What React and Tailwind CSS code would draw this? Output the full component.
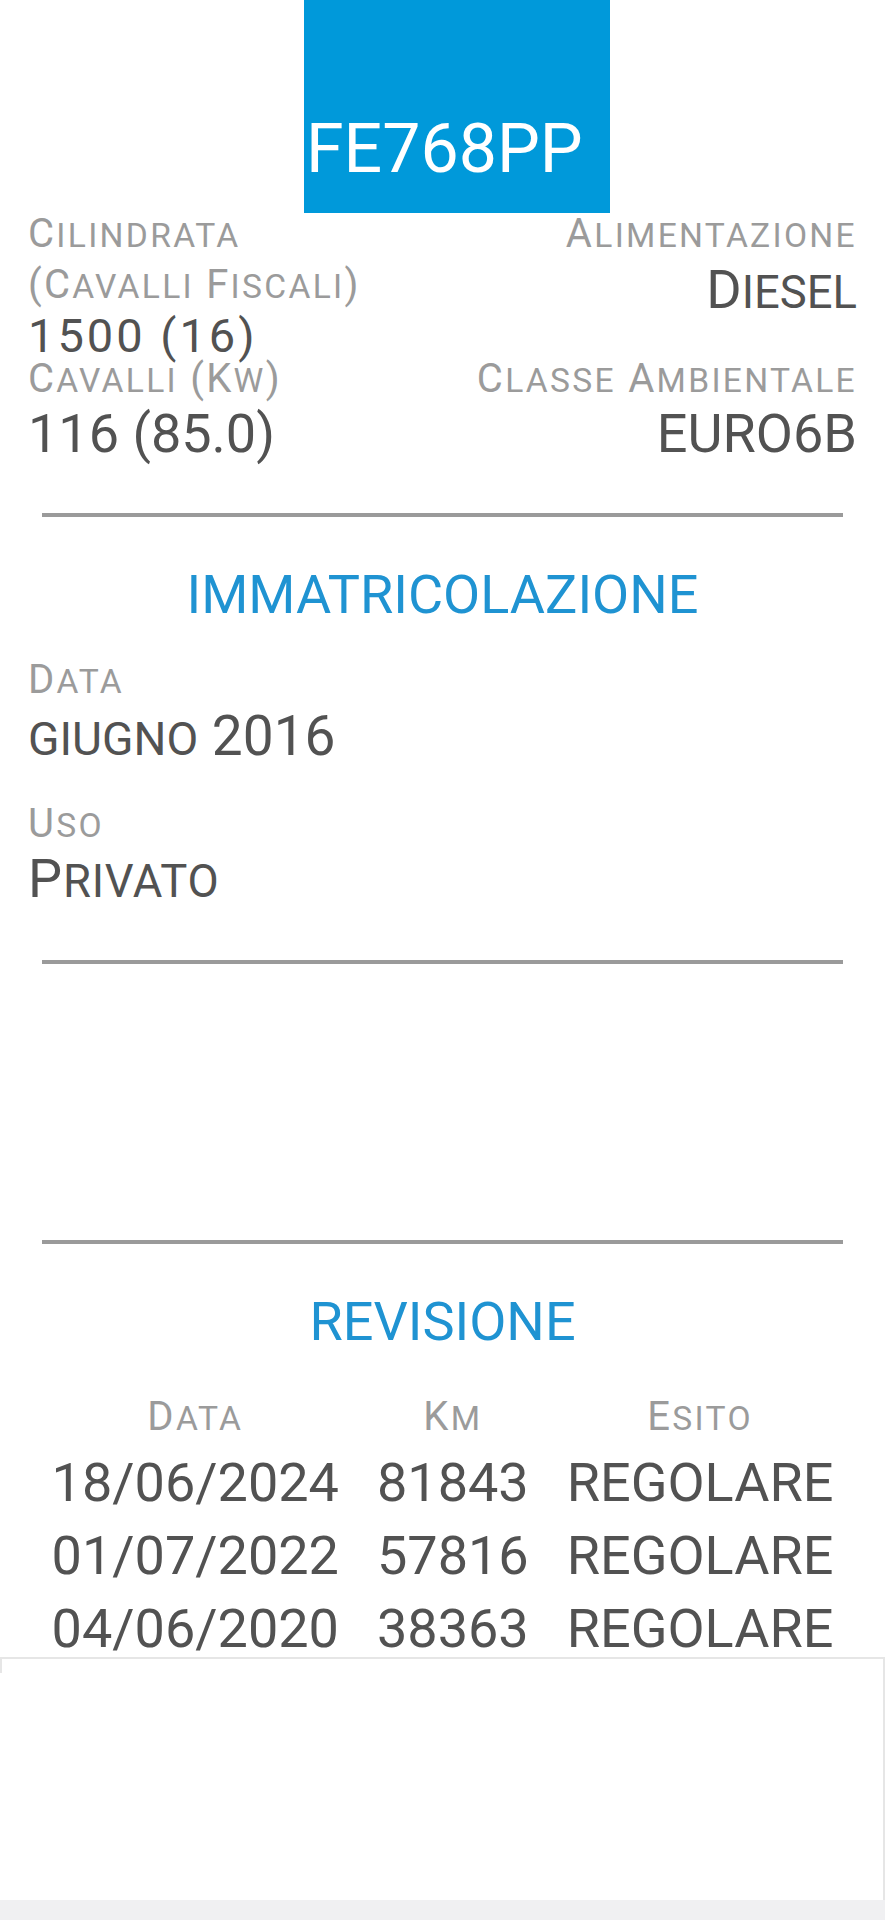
import React from "react";

function SC({ text }) {
  const parts = text.split(/([a-z]+)/);
  return (
    <>
      {parts.map((p, i) =>
        /^[a-z]+$/.test(p) ? (
          <span key={i} className="text-[0.84em] leading-none">
            {p.toUpperCase()}
          </span>
        ) : (
          <React.Fragment key={i}>{p}</React.Fragment>
        )
      )}
    </>
  );
}

function Label({ text, className = "" }) {
  return (
    <div className={`text-[40px] leading-[51px] tracking-[2.3px] text-[#9b9b9b] whitespace-nowrap ${className}`}>
      <SC text={text} />
    </div>
  );
}

function Divider({ className = "" }) {
  return <div className={`mx-[42px] h-[4px] bg-[#9a9a9a] ${className}`} />;
}

export default function App() {
  const rows = [
    ["18/06/2024", "81843", "REGOLARE"],
    ["01/07/2022", "57816", "REGOLARE"],
    ["04/06/2020", "38363", "REGOLARE"],
  ];
  return (
    <div className="relative min-h-[1920px] overflow-hidden bg-white font-['Roboto',sans-serif]">
      {/* Plate */}
      <div className="h-[213px]">
        <div className="ml-[304px] w-[306px] h-[213px] bg-[#0099da] overflow-hidden">
          <div className="pt-[115px] pl-[2px] text-[68px] leading-none text-white whitespace-nowrap">
            FE768PP
          </div>
        </div>
      </div>

      {/* Specs grid */}
      <div className="mt-[-5px] px-[28px] grid grid-cols-2 grid-rows-[145px_auto]">
        <div className="min-h-0">
          <Label text="Cilindrata" />
          <Label text="(Cavalli Fiscali)" />
          <div className="text-[47px] leading-[52px] tracking-[3px] text-[#525252] whitespace-nowrap">
            1500 (16)
          </div>
        </div>
        <div className="text-right">
          <Label text="Alimentazione" />
          <div className="text-[54px] leading-[61px] text-[#525252]">
            <SC text="Diesel" />
          </div>
        </div>
        <div>
          <Label text="Cavalli (Kw)" />
          <div className="text-[54px] leading-[60px] text-[#525252] whitespace-nowrap">
            116 (85.0)
          </div>
        </div>
        <div className="text-right">
          <Label text="Classe Ambientale" />
          <div className="text-[54px] leading-[60px] text-[#525252]">EURO6B</div>
        </div>
      </div>

      <Divider className="mt-[49px]" />

      <div className="mt-[46px] text-center text-[54px] leading-[64px] text-[#1f93d2]">
        IMMATRICOLAZIONE
      </div>

      <div className="px-[28px]">
        <Label text="Data" className="mt-[27px]" />
        <div className="text-[55px] leading-[62px] text-[#525252]">
          <SC text="giugno 2016" />
        </div>
        <Label text="Uso" className="mt-[31px]" />
        <div className="text-[54px] leading-[60px] tracking-[0.8px] text-[#525252]">
          <SC text="Privato" />
        </div>
      </div>

      <Divider className="mt-[51px]" />
      <Divider className="mt-[276px]" />

      <div className="mt-[46px] text-center text-[54px] leading-[64px] text-[#1f93d2]">
        REVISIONE
      </div>

      <div className="mt-[37px] grid grid-cols-[auto_auto_auto] justify-center gap-x-[38px] text-center">
        <Label text="Data" className="pb-[4px]" />
        <Label text="Km" className="pb-[4px]" />
        <Label text="Esito" className="pb-[4px]" />
        {rows.map((r, i) =>
          r.map((c, j) => (
            <div key={`${i}-${j}`} className="text-[54px] leading-[73px] text-[#525252] whitespace-nowrap">
              {c}
            </div>
          ))
        )}
      </div>

      {/* Bottom banner overlay */}
      <div className="absolute left-0 right-0 top-[1657px]">
        <div className="relative h-[243px] bg-white border-t-2 border-r-2 border-[#e6e6e6]">
          <div className="absolute left-0 top-0 h-[14px] w-[2px] bg-[#e6e6e6]" />
        </div>
        <div className="h-[20px] bg-[#f0f0f2]" />
      </div>
    </div>
  );
}
